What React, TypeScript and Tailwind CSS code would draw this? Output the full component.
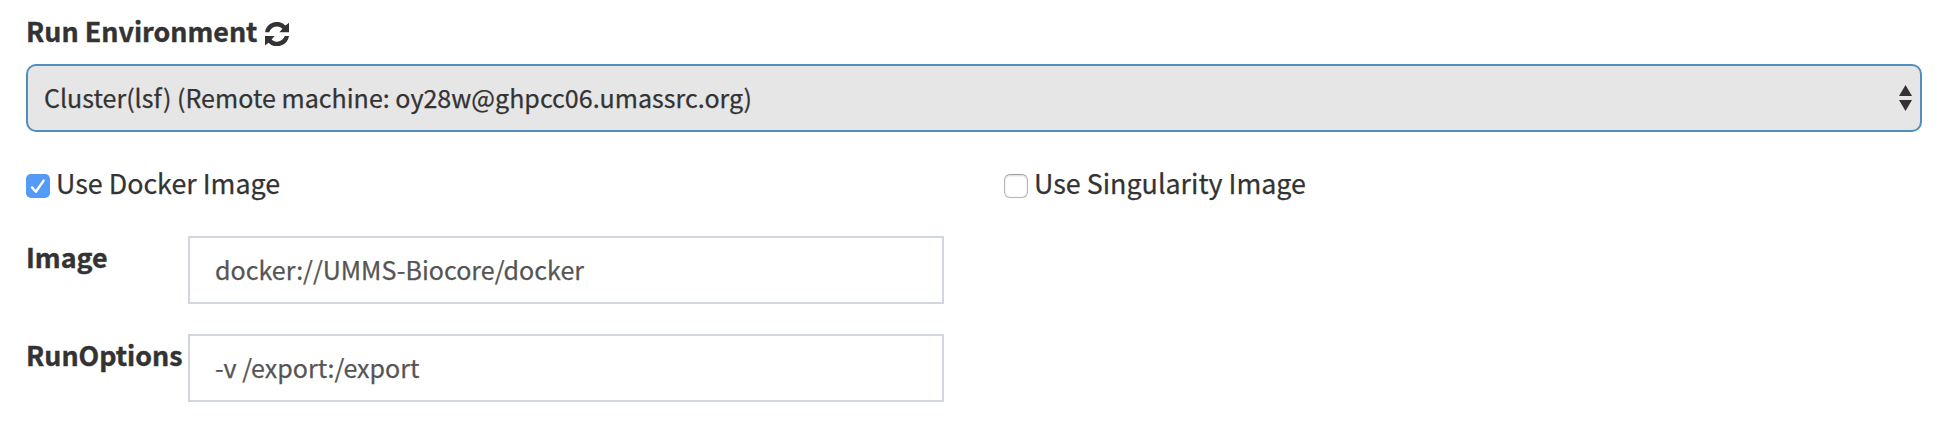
import type { ReactNode } from "react";

function RefreshIcon() {
  return (
    <svg viewBox="0 0 24 24" className="h-6 w-6 shrink-0" fill="currentColor" aria-hidden="true">
      <path d="M0 10.3A12.1 12.1 0 0 1 20.5 3.5L24 .7V10.3H14.4L17.4 6.8A7.9 7.9 0 0 0 4.3 10.3Z" />
      <path d="M24 13.9A12.1 12.1 0 0 1 3.5 20.7L0 23.5V13.9H9.6L6.6 17.4A7.9 7.9 0 0 0 19.7 13.9Z" />
    </svg>
  );
}

function Checkbox({ checked, children }: { checked: boolean; children: ReactNode }) {
  return (
    <div role="checkbox" aria-checked={checked} className="flex h-10 items-center text-[26.85px] leading-10">
      {checked ? (
        <span className="mt-[5px] flex h-6 w-6 items-center justify-center rounded-[5px] bg-[#539bf6]">
          <svg viewBox="0 0 24 24" className="h-6 w-6" fill="none" stroke="white" strokeWidth="2.4" strokeLinecap="round" strokeLinejoin="round">
            <path d="M6 13.4L9.9 17.8L17.6 6.6" />
          </svg>
        </span>
      ) : (
        <span className="mt-[5px] h-6 w-6 rounded-[6px] border border-[#b4b4b4] border-t-[#a0a0a0] bg-white shadow-[inset_0_1px_2px_rgba(0,0,0,0.15)]" />
      )}
      <span className="ml-[6px] whitespace-nowrap [-webkit-text-stroke:0.25px_currentColor]">{children}</span>
    </div>
  );
}

function Field({ label, value }: { label: string; value: string }) {
  return (
    <div className="flex h-[68px]">
      <div className="w-[162px] shrink-0 whitespace-nowrap text-[26.85px] font-bold leading-[42px] [-webkit-text-stroke:0.4px_currentColor]">{label}</div>
      <div className="flex h-[68px] w-[756px] items-center border-2 border-[#d2d6de] bg-white px-[25px] text-[25.05px] text-[#555] [-webkit-text-stroke:0.25px_currentColor]">
        {value}
      </div>
    </div>
  );
}

export default function App() {
  return (
    <main className="h-[424px] w-full bg-white pl-[26px] pr-[22px] pt-[11px] font-['Noto_Sans_CJK_SC',sans-serif] text-[#333]">
      <div className="flex h-[53px] items-start">
        <span className="whitespace-nowrap text-[26.85px] font-bold leading-10 [-webkit-text-stroke:0.4px_currentColor]">Run Environment</span>
        <span className="ml-2 mt-[11px]">
          <RefreshIcon />
        </span>
      </div>
      <div className="flex h-[68px] items-center justify-between rounded-[10px] border-2 border-[#4f8fbd] bg-[#e6e6e6] pl-4 pr-2 text-[25.05px]">
        <span className="whitespace-nowrap [-webkit-text-stroke:0.25px_currentColor]">Cluster(lsf) (Remote machine: oy28w@ghpcc06.umassrc.org)</span>
        <svg viewBox="0 0 13 26" className="h-[26px] w-[13px]" fill="#333" aria-hidden="true">
          <path d="M6.5 0L13 11H0ZM0 15H13L6.5 26Z" />
        </svg>
      </div>
      <div className="mt-[31px] grid grid-cols-[978px_1fr]">
        <Checkbox checked>Use Docker Image</Checkbox>
        <Checkbox checked={false}>Use Singularity Image</Checkbox>
      </div>
      <div className="mt-[33px] flex flex-col gap-[30px]">
        <Field label="Image" value="docker://UMMS-Biocore/docker" />
        <Field label="RunOptions" value="-v /export:/export" />
      </div>
    </main>
  );
}
